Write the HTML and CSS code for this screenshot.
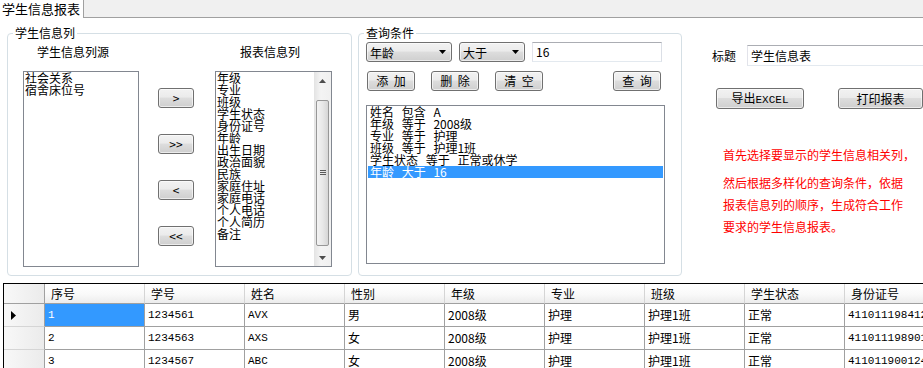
FILE: index.html
```html
<!DOCTYPE html>
<html lang="zh-CN">
<head>
    <meta charset="UTF-8">
    <title>学生信息报表</title>
    <link rel="stylesheet" href="styles.css">
</head>
<body>

<div class="tabbar">
    <div class="tab">学生信息报表</div>
    <div class="tab-rest"></div>
</div>

<div class="panel">
    <fieldset class="group group-cols">
        <legend>学生信息列</legend>
        <div class="columns">
            <div class="col-src">
                <div class="label label-src">学生信息列源</div>
                <div class="listbox">
                    <div>社会关系</div>
                    <div>宿舍床位号</div>
                </div>
            </div>
            <div class="arrows">
                <button class="btn btn-arrow">&gt;</button>
                <button class="btn btn-arrow">&gt;&gt;</button>
                <button class="btn btn-arrow">&lt;</button>
                <button class="btn btn-arrow">&lt;&lt;</button>
            </div>
            <div class="col-dst">
                <div class="label label-dst">报表信息列</div>
                <div class="listbox listbox-scroll">
                    <div class="items">
                        <div>年级</div>
                        <div>专业</div>
                        <div>班级</div>
                        <div>学生状态</div>
                        <div>身份证号</div>
                        <div>年龄</div>
                        <div>出生日期</div>
                        <div>政治面貌</div>
                        <div>民族</div>
                        <div>家庭住址</div>
                        <div>家庭电话</div>
                        <div>个人电话</div>
                        <div>个人简历</div>
                        <div>备注</div>
                    </div>
                    <div class="scrollbar">
                        <div class="scroll-arrow">
                            <svg width="7" height="4"><polygon points="0,4 7,4 3.5,0" fill="#4d4d4d"/></svg>
                        </div>
                        <div class="scroll-track">
                            <div class="scroll-thumb">
                                <svg width="6" height="6"><path d="M0 0.5h6M0 2.5h6M0 4.5h6" stroke="#5a5a5a"/></svg>
                            </div>
                        </div>
                        <div class="scroll-arrow">
                            <svg width="7" height="4"><polygon points="0,0 7,0 3.5,4" fill="#4d4d4d"/></svg>
                        </div>
                    </div>
                </div>
            </div>
        </div>
    </fieldset>

    <fieldset class="group group-query">
        <legend>查询条件</legend>
        <div class="query-row query-top">
            <div class="combo combo-field">
                <span>年龄</span>
                <svg width="7" height="4"><polygon points="0,0 7,0 3.5,4" fill="#000"/></svg>
            </div>
            <div class="combo combo-op">
                <span>大于</span>
                <svg width="7" height="4"><polygon points="0,0 7,0 3.5,4" fill="#000"/></svg>
            </div>
            <div class="textbox query-value">16</div>
        </div>
        <div class="query-row query-buttons">
            <button class="btn btn-action">添 加</button>
            <button class="btn btn-action">删 除</button>
            <button class="btn btn-action">清 空</button>
            <button class="btn btn-action btn-search">查 询</button>
        </div>
        <div class="listbox query-list">
            <div>姓名 包含 A</div>
            <div>年级 等于 2008级</div>
            <div>专业 等于 护理</div>
            <div>班级 等于 护理1班</div>
            <div>学生状态 等于 正常或休学</div>
            <div class="selected">年龄 大于 16</div>
        </div>
    </fieldset>

    <div class="side">
        <div class="title-row">
            <span>标题</span>
            <div class="textbox title-input">学生信息表</div>
        </div>
        <div class="side-buttons">
            <button class="btn btn-export">导出<span class="ascii">EXCEL</span></button>
            <button class="btn btn-print">打印报表</button>
        </div>
        <div class="note">
            <div class="note-first">首先选择要显示的学生信息相关列，</div>
            <div>然后根据多样化的查询条件，依据</div>
            <div>报表信息列的顺序，生成符合工作</div>
            <div>要求的学生信息报表。</div>
        </div>
    </div>
</div>

<div class="grid-wrap">
    <table class="grid">
        <colgroup>
            <col class="col-head">
            <col class="col-data" span="9">
        </colgroup>
        <thead>
            <tr>
                <th class="corner"></th>
                <th>序号</th>
                <th>学号</th>
                <th>姓名</th>
                <th>性别</th>
                <th>年级</th>
                <th>专业</th>
                <th>班级</th>
                <th>学生状态</th>
                <th>身份证号</th>
            </tr>
        </thead>
        <tbody>
            <tr>
                <th class="rowhead">
                    <svg width="5" height="9"><polygon points="0,0 5,4.5 0,9" fill="#000"/></svg>
                </th>
                <td class="num current">1</td>
                <td class="num">1234561</td>
                <td class="num">AVX</td>
                <td>男</td>
                <td>2008级</td>
                <td>护理</td>
                <td>护理1班</td>
                <td>正常</td>
                <td class="num">411011198412...</td>
            </tr>
            <tr>
                <th class="rowhead"></th>
                <td class="num">2</td>
                <td class="num">1234563</td>
                <td class="num">AXS</td>
                <td>女</td>
                <td>2008级</td>
                <td>护理</td>
                <td>护理1班</td>
                <td>正常</td>
                <td class="num">411011198901...</td>
            </tr>
            <tr>
                <th class="rowhead"></th>
                <td class="num">3</td>
                <td class="num">1234567</td>
                <td class="num">ABC</td>
                <td>女</td>
                <td>2008级</td>
                <td>护理</td>
                <td>护理1班</td>
                <td>正常</td>
                <td class="num">41101190012411</td>
            </tr>
        </tbody>
    </table>
</div>

</body>
</html>
```

FILE: styles.css
```css
body {
    margin: 0;
    width: 923px;
    height: 368px;
    overflow: hidden;
    background: #fff;
    font-family: "Noto Sans CJK SC", sans-serif;
    font-size: 12px;
    color: #000;
}
.tabbar {
    display: flex;
    height: 18px;
}
.tab {
    width: 83px;
    padding-left: 2px;
    box-sizing: border-box;
    font-size: 13px;
    line-height: 18px;
}
.tab-rest {
    flex: 1;
    background: #f0f0f0;
    border-left: 1px solid #a0a0a0;
    border-bottom: 1px solid #a0a0a0;
}
.panel {
    display: flex;
    height: 265px;
    padding: 8px 0 0 7px;
    box-sizing: border-box;
}
.group {
    margin: 0;
    padding: 0;
    min-width: 0;
    height: 250px;
    box-sizing: border-box;
    border: 1px solid #d5dfe5;
    border-radius: 4px;
    flex: none;
}
.group legend {
    margin-left: 5px;
    padding: 0 2px;
    line-height: 14px;
}
.group-cols {
    width: 345px;
}
.group-query {
    width: 324px;
    margin-left: 6px;
}
.columns {
    display: flex;
    padding: 5px 0 0 15px;
}
.label {
    line-height: 14px;
    margin-bottom: 12px;
}
.label-src {
    padding-left: 14px;
}
.label-dst {
    padding-left: 25px;
}
.col-src {
    width: 116px;
}
.col-dst {
    width: 117px;
    margin-left: 21px;
}
.listbox {
    height: 196px;
    box-sizing: border-box;
    border: 1px solid #828790;
    background: #fff;
    padding: 0 1px;
    line-height: 12px;
    white-space: nowrap;
}
.listbox-scroll {
    display: flex;
    padding: 0 0 0 1px;
}
.items {
    flex: 1;
}
.scrollbar {
    width: 17px;
    display: flex;
    flex-direction: column;
    background: linear-gradient(to right, #e3e3e3, #f4f4f4 40%, #f0f0f0);
}
.scroll-arrow {
    height: 17px;
    display: flex;
    align-items: center;
    justify-content: center;
}
.scroll-track {
    flex: 1;
}
.scroll-thumb {
    margin: 11px 2px 0 2px;
    height: 146px;
    box-sizing: border-box;
    border: 1px solid #979797;
    border-radius: 2px;
    background: linear-gradient(to right, #f3f3f3, #e8e8e8 50%, #d6d6d6);
    display: flex;
    align-items: center;
    justify-content: center;
}
.arrows {
    display: flex;
    flex-direction: column;
    gap: 26px;
    padding-top: 43px;
    margin-left: 19px;
}
.btn {
    height: 20px;
    padding: 0;
    border: 1px solid #707070;
    border-radius: 3px;
    background: linear-gradient(#f2f2f2 0%, #ebebeb 45%, #dddddd 50%, #cfcfcf 100%);
    box-shadow: inset 0 0 0 1px rgba(255, 255, 255, 0.6);
    font-family: inherit;
    font-size: 12px;
    line-height: 18px;
    color: #000;
}
.btn-arrow {
    width: 36px;
}
.query-row {
    display: flex;
    align-items: center;
}
.query-top {
    padding: 2px 0 0 7px;
}
.combo {
    display: flex;
    align-items: center;
    justify-content: space-between;
    height: 20px;
    box-sizing: border-box;
    padding: 0 5px 0 3px;
    border: 1px solid #707070;
    border-radius: 3px;
    background: linear-gradient(#f2f2f2 0%, #ebebeb 45%, #dddddd 50%, #cfcfcf 100%);
    box-shadow: inset 0 0 0 1px rgba(255, 255, 255, 0.6);
}
.combo-field {
    width: 86px;
}
.combo-op {
    width: 66px;
    margin-left: 7px;
}
.textbox {
    height: 20px;
    box-sizing: border-box;
    padding-left: 3px;
    border: 1px solid #abadb3;
    border-left-color: #e2e3ea;
    border-right-color: #dbdfe6;
    border-bottom-color: #e3e9ef;
    line-height: 18px;
    background: #fff;
}
.query-value {
    width: 130px;
    margin-left: 7px;
}
.query-buttons {
    padding: 9px 20px 0 8px;
}
.btn-action {
    width: 48px;
    word-spacing: 3px;
}
.btn-action + .btn-action {
    margin-left: 16px;
}
.btn-action.btn-search {
    margin-left: auto;
}
.query-list {
    width: 299px;
    height: 159px;
    margin: 14px 0 0 7px;
    word-spacing: 5px;
}
.query-list div {
    padding-left: 2px;
}
.query-list .selected {
    background: #3399ff;
    color: #fff;
}
.side {
    flex: none;
    padding: 19px 0 0 30px;
}
.title-row {
    display: flex;
    align-items: center;
}
.title-input {
    width: 190px;
    height: 21px;
    margin-left: 11px;
    line-height: 19px;
}
.side-buttons {
    display: flex;
    margin: 22px 0 0 4px;
}
.btn-export {
    width: 88px;
    height: 21px;
}
.btn-print {
    width: 85px;
    height: 21px;
    margin-left: 34px;
}
.ascii {
    font-family: "Liberation Mono", monospace;
    font-size: 11px;
}
.note {
    margin: 35px 0 0 11px;
    color: #ff0000;
    line-height: 22px;
    white-space: nowrap;
}
.note-first {
    margin-bottom: 6px;
}
.grid-wrap {
    margin-left: 3px;
    height: 85px;
    overflow: hidden;
    border-top: 1px solid #000;
    border-left: 1px solid #000;
}
.grid {
    width: 941px;
    table-layout: fixed;
    border-collapse: separate;
    border-spacing: 0;
}
.col-head {
    width: 41px;
}
.col-data {
    width: 100px;
}
.grid th {
    height: 19px;
    padding: 0 0 0 6px;
    text-align: left;
    font-weight: normal;
    line-height: 18px;
    border-right: 1px solid #d5d5d5;
    border-bottom: 1px solid #a0a0a0;
    background: linear-gradient(#ffffff 0%, #f9f9f9 55%, #ececec 100%);
}
.grid .corner,
.grid .rowhead {
    padding: 0;
    border-right: 1px solid #a0a0a0;
    background: linear-gradient(to right, #f8f8f8, #ebebeb);
}
.grid .rowhead {
    padding-left: 7px;
    border-bottom: 1px solid #d5d5d5;
}
.rowhead svg {
    display: block;
}
.grid td {
    height: 22px;
    padding: 0 3px;
    line-height: 22px;
    white-space: nowrap;
    overflow: hidden;
    border-right: 1px solid #a0a0a0;
    border-bottom: 1px solid #a0a0a0;
}
.grid td.num {
    font-family: "Liberation Mono", monospace;
    font-size: 11px;
}
.grid td.current {
    background: #3399ff;
    color: #fff;
}
```
